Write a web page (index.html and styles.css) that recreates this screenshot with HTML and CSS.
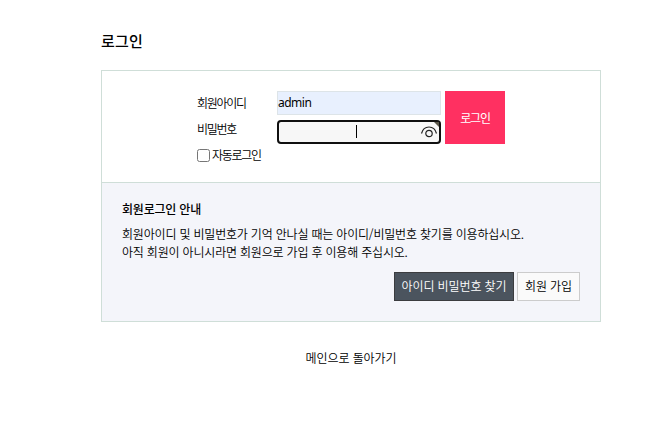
FILE: index.html
```html
<!DOCTYPE html>
<html lang="ko">
<head>
  <meta charset="UTF-8">
  <title>로그인</title>
  <meta name="viewport" content="width=device-width, initial-scale=1.0">
  <link rel="stylesheet" href="styles.css">
</head>
<body>

<div class="login">
  <h1>로그인</h1>

  <div class="login-box">
    <form class="login-form">
      <div class="fields">
        <label class="id-label" for="login_id">회원아이디</label>
        <input class="id-input" type="text" id="login_id" value="admin">
        <label class="pw-label" for="login_pw">비밀번호</label>
        <div class="pw-input" id="login_pw">
          <span class="caret"></span>
          <svg class="eye" width="18" height="14" viewBox="0 0 18 14" fill="none" stroke="#222" stroke-width="1.2">
            <path d="M1.500 8.500C2.500 4.500 5.300 2 9 2s6.500 2.500 7.500 6.500"/>
            <circle cx="9" cy="8.500" r="3.200"/>
          </svg>
          <svg class="corner" width="5" height="5" viewBox="0 0 5 5"><path d="M0 0h5v5z" fill="#5a574a"/></svg>
        </div>
        <div class="auto">
          <input type="checkbox" id="auto_login">
          <label for="auto_login">자동로그인</label>
        </div>
      </div>
      <button class="btn-submit" type="button">로그인</button>
    </form>

    <div class="login-info">
      <h2>회원로그인 안내</h2>
      <p>회원아이디 및 비밀번호가 기억 안나실 때는 아이디/비밀번호 찾기를 이용하십시오.<br>
      아직 회원이 아니시라면 회원으로 가입 후 이용해 주십시오.</p>
      <div class="links">
        <a class="btn dark" href="#">아이디 비밀번호 찾기</a>
        <a class="btn" href="#">회원 가입</a>
      </div>
    </div>
  </div>

  <a class="back" href="#">메인으로 돌아가기</a>
</div>

</body>
</html>
```
FILE: styles.css
```css
* { box-sizing: border-box; margin: 0; padding: 0; }
body {
  font-family: "Noto Sans CJK KR", sans-serif;
  font-size: 12px;
  font-weight: 350;
  color: #000;
  background: #fff;
}
a {
  color: #000;
  text-decoration: none;
}
.login {
  width: 500px;
  margin-left: 101px;
  padding-top: 31px;
}
h1 {
  font-size: 15px;
  font-weight: 500;
  line-height: 20px;
  letter-spacing: 0.2px;
  margin-bottom: 19px;
}
.login-box {
  border: 1px solid #cfded8;
  height: 252px;
}
.login-form {
  display: flex;
  gap: 4px;
  height: 112px;
  padding: 20px 0 0 95px;
  border-bottom: 1px solid #cfded8;
  letter-spacing: -1.3px;
}
.fields {
  display: grid;
  grid-template-columns: 80px 164px;
  grid-template-rows: 24px 24px 17px;
  row-gap: 5px;
  align-content: start;
}
.fields label {
  line-height: 24px;
}
.fields .pw-label {
  line-height: 17px;
}
.id-input {
  width: 164px;
  height: 24px;
  padding: 0 0 2px;
  border: 1px solid #dde4e8;
  background: #e8f0fe;
  font-family: "Noto Sans", sans-serif;
  font-size: 12px;
  letter-spacing: -0.5px;
}
.pw-input {
  position: relative;
  display: flex;
  align-items: center;
  justify-content: flex-end;
  height: 24px;
  padding-right: 1px;
  border: 2px solid #101010;
  border-radius: 4px;
  background: #f7f7f7;
}
.caret {
  width: 1px;
  height: 13px;
  margin: 0 63px 2px 0;
  background: #000;
}
.corner {
  position: absolute;
  top: 0;
  right: 0;
}
.auto {
  grid-column: 1 / 3;
  display: flex;
  align-items: flex-start;
  gap: 2px;
}
.auto input {
  width: 13px;
  height: 13px;
}
.fields .auto label {
  line-height: 12px;
}
.btn-submit {
  width: 60px;
  height: 53px;
  padding-bottom: 1px;
  border: 0;
  background: #ff3061;
  color: #fff;
  font-family: inherit;
  font-size: 12px;
  letter-spacing: -1.2px;
}
.login-info {
  height: 138px;
  padding: 17px 20px 0;
  background: #f4f5fa;
}
h2 {
  font-size: 12px;
  font-weight: 500;
  line-height: 18px;
  letter-spacing: -0.2px;
  margin-bottom: 7px;
}
.login-info p {
  line-height: 18px;
  letter-spacing: -0.19px;
  white-space: nowrap;
}
.links {
  display: flex;
  justify-content: flex-end;
  gap: 3px;
  margin-top: 11px;
}
.btn {
  width: 63px;
  height: 29px;
  border: 1px solid #ccc;
  background: #fafafa;
  line-height: 26px;
  letter-spacing: -0.1px;
  text-align: center;
}
.btn.dark {
  width: 120px;
  border-color: #3b3c3f;
  background: #4b545e;
  color: #fff;
}
.back {
  display: block;
  margin-top: 27px;
  line-height: 18px;
  letter-spacing: -0.1px;
  text-align: center;
}
```
